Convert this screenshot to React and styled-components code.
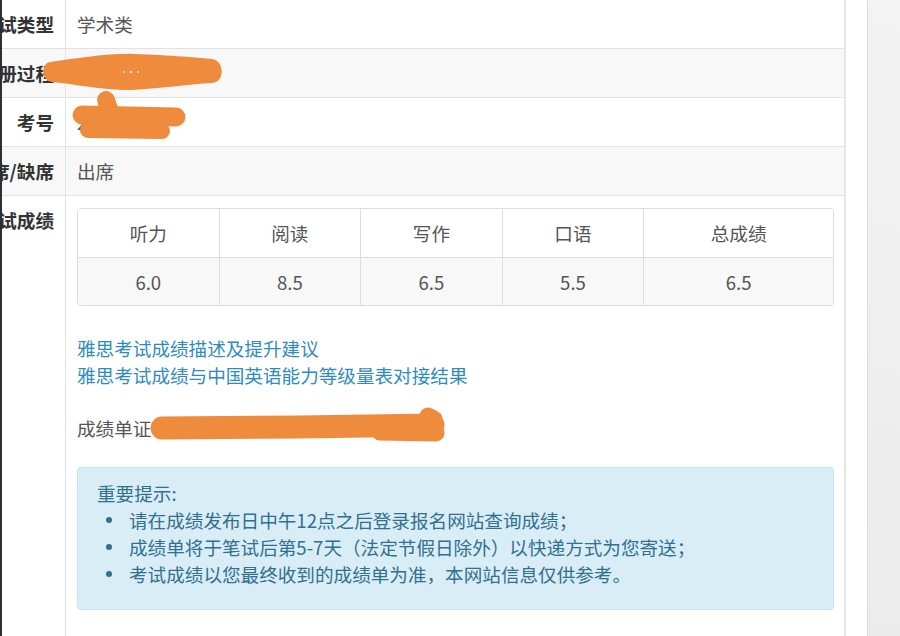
import React from "react";
import styled, { createGlobalStyle } from "styled-components";

const Global = createGlobalStyle`
  html, body { margin: 0; padding: 0; background: #ffffff; }
  body {
    font-family: "Noto Sans CJK SC", "Noto Sans", sans-serif;
    font-size: 18.6px;
    color: #555555;
  }
  * { box-sizing: border-box; }
`;

const Page = styled.div`
  position: relative;
  display: flex;
  width: 900px;
  height: 636px;
  overflow: hidden;
  background: #ffffff;
`;

const Edge = styled.div`
  flex: 0 0 2px;
  background: #2f2f2f;
`;

const Main = styled.main`
  flex: 1 1 auto;
  display: flex;
  flex-direction: column;
  background: #ffffff;
  padding-right: 21px;
  border-right: 1px solid #dcdcdc;
`;

const Gutter = styled.aside`
  flex: 0 0 32px;
  background: linear-gradient(#f3f3f3, #ebebeb);
`;

const InfoTable = styled.div`
  flex: 1 1 auto;
  display: flex;
  flex-direction: column;
  margin-top: -1px;
  border-right: 2px solid #e6e6e6;
`;

const Row = styled.div`
  flex: ${(p) => (p.$fill ? "1 1 auto" : "0 0 auto")};
  display: grid;
  grid-template-columns: 64px 1fr;
  border-top: 1px solid #e2e2e2;
  background: ${(p) => (p.$striped ? "#f8f8f8" : "#ffffff")};
`;

const Label = styled.div`
  display: flex;
  justify-content: flex-end;
  align-items: flex-start;
  overflow: hidden;
  white-space: nowrap;
  padding: 12px 11px;
  line-height: 24px;
  font-weight: 700;
  color: #333333;
  border-right: 1px solid #e2e2e2;
`;

const Value = styled.div`
  padding: 12px 10px 12px 11px;
  line-height: 24px;
  color: #555555;
  min-height: 48px;
`;

const ScoreTable = styled.div`
  display: grid;
  grid-template-columns: repeat(4, 1fr) 25%;
  border: 1px solid #dddddd;
  border-radius: 4px;
  overflow: hidden;
`;

const ScoreCell = styled.div`
  display: flex;
  align-items: center;
  justify-content: center;
  height: ${(p) => (p.$head ? "49px" : "47px")};
  background: ${(p) => (p.$head ? "#ffffff" : "#f8f8f8")};
  border-bottom: ${(p) => (p.$head ? "1px solid #dddddd" : "none")};
  border-right: ${(p) => (p.$last ? "none" : "1px solid #dddddd")};
  color: #555555;
`;

const Links = styled.div`
  margin-top: 28px;
`;

const Link = styled.a`
  display: block;
  line-height: 27px;
  color: #2f8bbd;
  text-decoration: none;
`;

const Certificate = styled.p`
  margin: 26px 0 0;
  line-height: 27px;
  color: #555555;
`;

const Alert = styled.div`
  margin-top: 26px;
  padding: 11px 19px 22px;
  background: #d9edf7;
  border: 1px solid #bce8f1;
  border-radius: 4px;
  color: #31708f;
  line-height: 27px;
`;

const AlertTitle = styled.div``;

const Bullets = styled.ul`
  margin: 0;
  padding: 0;
  list-style: none;
`;

const Bullet = styled.li`
  display: flex;
  align-items: center;
  white-space: nowrap;
  &::before {
    content: "";
    flex: 0 0 6px;
    height: 6px;
    margin: 0 17px 0 9px;
    border-radius: 50%;
    background: #31708f;
  }
`;

const Overlay = styled.svg`
  position: absolute;
  inset: 0;
  pointer-events: none;
`;

const rows = [
  { label: "考试类型", value: "学术类" },
  { label: "注册过程", value: "" },
  { label: "考号", value: "2" },
  { label: "出席/缺席", value: "出席" },
];

const heads = ["听力", "阅读", "写作", "口语", "总成绩"];
const scores = ["6.0", "8.5", "6.5", "5.5", "6.5"];

const ORANGE = "#ef8b3d";

export default function App() {
  return (
    <>
      <Global />
      <Page>
        <Edge />
        <Main>
          <InfoTable>
            {rows.map((r, i) => (
              <Row key={r.label} $striped={i % 2 === 1}>
                <Label>{r.label}</Label>
                <Value>{r.value}</Value>
              </Row>
            ))}
            <Row $fill>
              <Label>考试成绩</Label>
              <Value>
                <ScoreTable>
                  {heads.map((h, i) => (
                    <ScoreCell key={h} $head $last={i === heads.length - 1}>
                      {h}
                    </ScoreCell>
                  ))}
                  {scores.map((s, i) => (
                    <ScoreCell key={i} $last={i === scores.length - 1}>
                      {s}
                    </ScoreCell>
                  ))}
                </ScoreTable>
                <Links>
                  <Link href="#">雅思考试成绩描述及提升建议</Link>
                  <Link href="#">雅思考试成绩与中国英语能力等级量表对接结果</Link>
                </Links>
                <Certificate>成绩单证书编号：</Certificate>
                <Alert>
                  <AlertTitle>重要提示:</AlertTitle>
                  <Bullets>
                    <Bullet>请在成绩发布日中午12点之后登录报名网站查询成绩；</Bullet>
                    <Bullet>成绩单将于笔试后第5-7天（法定节假日除外）以快递方式为您寄送；</Bullet>
                    <Bullet>考试成绩以您最终收到的成绩单为准，本网站信息仅供参考。</Bullet>
                  </Bullets>
                </Alert>
              </Value>
            </Row>
          </InfoTable>
        </Main>
        <Gutter />
        <Overlay width="900" height="636" viewBox="0 0 900 636">
          <path
            d="M50 62 C80 58, 110 53, 135 54 C170 55, 200 58, 212 59 C224 60, 226 82, 212 83 C190 84, 165 88, 130 90 C100 90, 75 84, 52 82 C41 81, 41 63, 50 62 Z"
            fill={ORANGE}
          />
          <circle cx="124" cy="72" r="1" fill="#fff" opacity="0.8" />
          <circle cx="131" cy="72" r="1.2" fill="#fff" opacity="0.8" />
          <circle cx="138" cy="72" r="1" fill="#fff" opacity="0.8" />
          <g stroke={ORANGE} strokeLinecap="round" fill="none">
            <path d="M82 115 L176 117" strokeWidth="19" />
            <path d="M106 100 L110 112" strokeWidth="18" />
            <path d="M88 130 L162 131" strokeWidth="16" />
            <path d="M162 428 L300 427 L433 425" strokeWidth="23" />
            <path d="M428 416 L434 419" strokeWidth="17" />
            <path d="M380 432 L436 433" strokeWidth="17" />
          </g>
        </Overlay>
      </Page>
    </>
  );
}
